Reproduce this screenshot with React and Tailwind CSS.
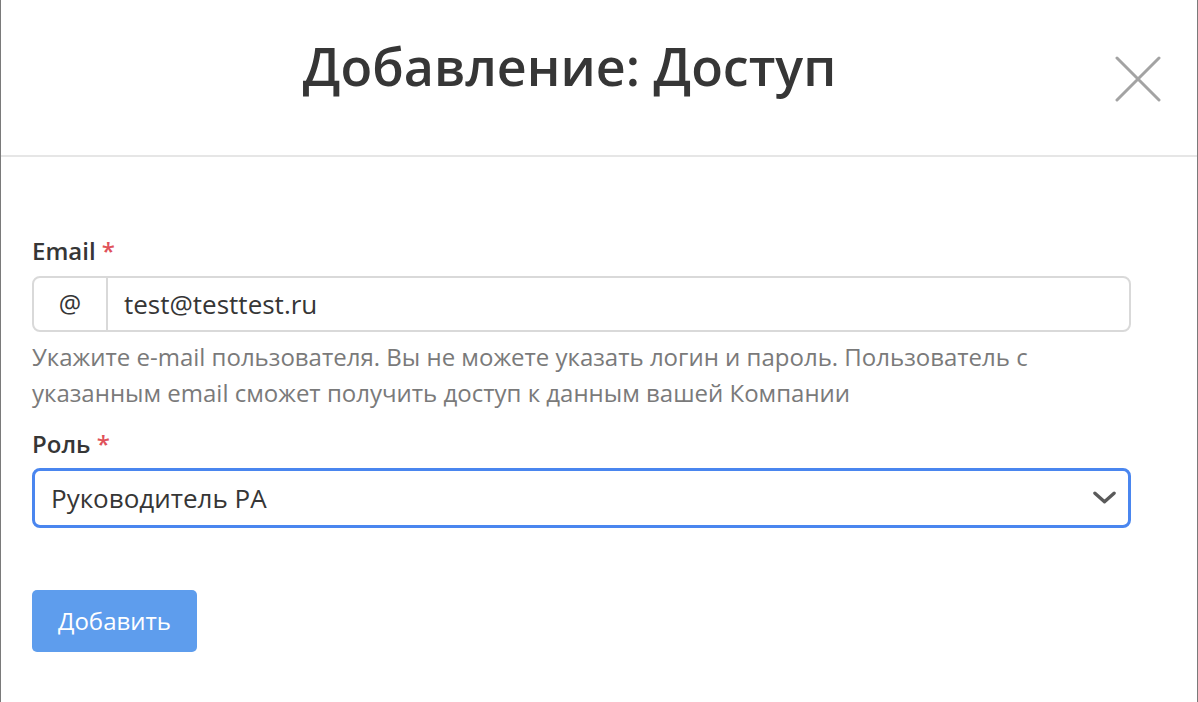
import React from 'react'

const App = () => {
  return (
    <div className="w-[1198px] h-[702px] bg-white border-x border-[#7a7a7a] overflow-hidden" style={{ fontFamily: '"Open Sans", sans-serif' }}>
      <div className="relative h-[157px] border-b-2 border-[#e6e6e6] flex items-center">
        <h1 className="w-full pr-[59px] text-center text-[52px] font-semibold text-[#363636] leading-none pb-[24px]">Добавление: Доступ</h1>
        <button className="absolute right-[36px] top-[56px] w-[46px] h-[46px]">
          <svg viewBox="0 0 46 46" className="w-full h-full" fill="none" stroke="#a3a3a3" strokeWidth="3" strokeLinecap="round">
            <path d="M2 2L44 44M44 2L2 44" />
          </svg>
        </button>
      </div>

      <div className="pl-[31px] pr-[66px] pt-[78px]">
        <label className="block text-[24px] font-semibold text-[#363636] leading-[32px]">
          Email <span className="text-[#e0525a]">*</span>
        </label>
        <div className="mt-[9px] flex h-[56px] border-2 border-[#d9d9d9] rounded-[8px]">
          <div className="w-[74px] flex items-center justify-center text-[25px] text-[#363636] border-r-2 border-[#d9d9d9]">@</div>
          <div className="flex-1 flex items-center pl-[16px] text-[26px] text-[#363636]">test@testtest.ru</div>
        </div>
        <p className="mt-[7px] text-[24px] leading-[36px] text-[#7a7a7a]">
          Укажите e-mail пользователя. Вы не можете указать логин и пароль. Пользователь с указанным email сможет получить доступ к данным вашей Компании
        </p>

        <label className="mt-[17px] block text-[24px] font-semibold text-[#363636] leading-[32px]">
          Роль <span className="text-[#e0525a]">*</span>
        </label>
        <div className="mt-[8px] flex items-center h-[60px] border-[3px] border-[#4a86ef] rounded-[8px] pl-[16px] pr-[12px]">
          <span className="flex-1 text-[26px] text-[#363636]">Руководитель РА</span>
          <svg viewBox="0 0 24 14" className="w-[23px] h-[14px]" fill="none" stroke="#5a5a5a" strokeWidth="3.5" strokeLinecap="round" strokeLinejoin="round">
            <path d="M2 2L12 11L22 2" />
          </svg>
        </div>

        <button className="mt-[62px] h-[62px] w-[165px] bg-[#5e9ded] rounded-[5px] text-white text-[24px]">Добавить</button>
      </div>
    </div>
  )
}

export default App
